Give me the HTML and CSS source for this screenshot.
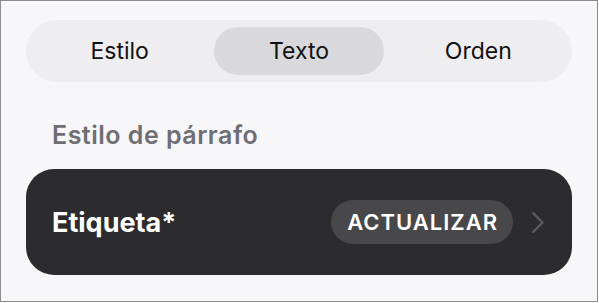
FILE: index.html
```html
<!DOCTYPE html>
<html lang="es">
<head>
    <meta charset="UTF-8">
    <title>Texto</title>
    <link rel="stylesheet" href="styles.css">
</head>
<body>

    <div class="panel">
        <div class="segments">
            <div class="segment">Estilo</div>
            <div class="segment selected">Texto</div>
            <div class="segment">Orden</div>
        </div>

        <h2 class="section-title">Estilo de párrafo</h2>

        <div class="style-row">
            <span class="style-name">Etiqueta*</span>
            <span class="update">ACTUALIZAR</span>
            <svg class="chevron" width="14" height="23" viewBox="0 0 14 23">
                <path d="M2 2 L11.5 11.5 L2 21" fill="none" stroke="#5b5b5f" stroke-width="2.4" stroke-linecap="round" stroke-linejoin="round"/>
            </svg>
        </div>
    </div>

</body>
</html>
```

FILE: styles.css
```css
body {
    margin: 0;
    font-family: Inter, "Liberation Sans", sans-serif;
}
.panel {
    width: 598px;
    height: 302px;
    box-sizing: border-box;
    border: 1px solid #8c8c8c;
    background-color: #f7f7fa;
    padding: 19px 25px 0 25px;
}
.segments {
    display: flex;
    height: 62px;
    box-sizing: border-box;
    padding: 7px 4px;
    border-radius: 31px;
    background-color: #eeeef0;
}
.segment {
    flex: 1;
    margin: 0 5px;
    display: flex;
    justify-content: center;
    align-items: center;
    border-radius: 24px;
    font-size: 23px;
    color: #111;
}
.segment.selected {
    background-color: #d9d9dd;
}
.section-title {
    margin: 0;
    padding: 38px 0 0 26px;
    height: 49px;
    font-size: 25px;
    font-weight: 600;
    letter-spacing: 0.5px;
    color: #6e6e73;
    line-height: 30px;
}
.style-row {
    display: flex;
    align-items: center;
    height: 106px;
    box-sizing: border-box;
    padding: 0 27px 0 26px;
    border-radius: 28px;
    background-color: #2c2c2e;
}
.style-name {
    flex: 1;
    font-size: 27px;
    font-weight: 700;
    color: #fff;
}
.update {
    display: flex;
    align-items: center;
    height: 44px;
    padding: 0 15px 0 16px;
    border-radius: 22px;
    background-color: #48484a;
    color: #fff;
    font-size: 22px;
    font-weight: 600;
    letter-spacing: 1px;
}
.chevron {
    margin-left: 18px;
}
```
